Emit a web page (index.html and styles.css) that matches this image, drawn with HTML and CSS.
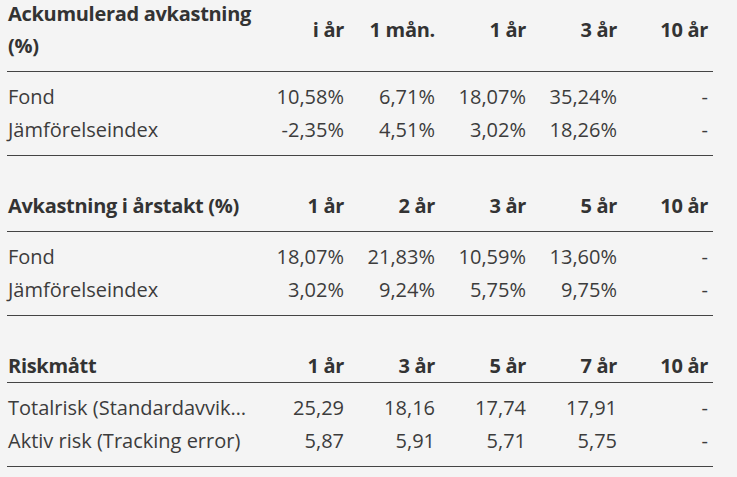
FILE: index.html
```html
<!DOCTYPE html>
<html lang="sv">
<head>
<meta charset="utf-8">
<link rel="stylesheet" href="styles.css">
</head>
<body>
<main class="page">
  <table class="perf first">
    <colgroup><col class="c-label"><col class="c-val"><col class="c-val"><col class="c-val"><col class="c-val"><col class="c-last"></colgroup>
    <thead>
      <tr><th class="label">Ackumulerad avkastning (%)</th><th>i år</th><th>1 mån.</th><th>1 år</th><th>3 år</th><th class="last">10 år</th></tr>
    </thead>
    <tbody>
      <tr class="r1"><td class="label">Fond</td><td>10,58%</td><td>6,71%</td><td>18,07%</td><td>35,24%</td><td class="last">-</td></tr>
      <tr class="r2"><td class="label">Jämförelseindex</td><td>-2,35%</td><td>4,51%</td><td>3,02%</td><td>18,26%</td><td class="last">-</td></tr>
    </tbody>
  </table>

  <table class="perf">
    <colgroup><col class="c-label"><col class="c-val"><col class="c-val"><col class="c-val"><col class="c-val"><col class="c-last"></colgroup>
    <thead>
      <tr><th class="label">Avkastning i årstakt (%)</th><th>1 år</th><th>2 år</th><th>3 år</th><th>5 år</th><th class="last">10 år</th></tr>
    </thead>
    <tbody>
      <tr class="r1"><td class="label">Fond</td><td>18,07%</td><td>21,83%</td><td>10,59%</td><td>13,60%</td><td class="last">-</td></tr>
      <tr class="r2"><td class="label">Jämförelseindex</td><td>3,02%</td><td>9,24%</td><td>5,75%</td><td>9,75%</td><td class="last">-</td></tr>
    </tbody>
  </table>

  <table class="perf risk">
    <colgroup><col class="c-label"><col class="c-val"><col class="c-val"><col class="c-val"><col class="c-val"><col class="c-last"></colgroup>
    <thead>
      <tr><th class="label">Riskmått</th><th>1 år</th><th>3 år</th><th>5 år</th><th>7 år</th><th class="last">10 år</th></tr>
    </thead>
    <tbody>
      <tr class="r1"><td class="label"><span class="clip" title="Totalrisk (Standardavvikelse)">Totalrisk (Standardavvik…</span></td><td>25,29</td><td>18,16</td><td>17,74</td><td>17,91</td><td class="last">-</td></tr>
      <tr class="r2"><td class="label">Aktiv risk (Tracking error)</td><td>5,87</td><td>5,91</td><td>5,71</td><td>5,75</td><td class="last">-</td></tr>
    </tbody>
  </table>
</main>
</body>
</html>
```

FILE: styles.css
```css
html, body {
  margin: 0;
  padding: 0;
  background: #f4f4f4;
}

body {
  font-family: "Open Sans", "Noto Sans", sans-serif;
  font-size: 20px;
  color: #3c3c3c;
}

.page {
  padding: 0 0 0 7px;
}

.perf {
  width: 706px;
  table-layout: fixed;
  border-collapse: collapse;
  margin-top: 34px;
}

.perf.first {
  margin-top: -2px;
}

.c-label { width: 246px; }
.c-val { width: 91px; }
.c-last { width: 96px; }

.perf th {
  font-weight: 700;
  color: #333333;
  line-height: 32px;
  letter-spacing: -0.3px;
  text-align: right;
  vertical-align: middle;
  padding: 0 0 9px 0;
  border-bottom: 1px solid #444444;
  white-space: nowrap;
}

.perf th.label {
  text-align: left;
  white-space: normal;
  padding-left: 1px;
}

.perf.risk th {
  padding-bottom: 0;
}

.perf td {
  line-height: 33px;
  text-align: right;
  padding: 0;
  white-space: nowrap;
}

.perf td.label {
  text-align: left;
  padding-left: 1px;
}

.perf th.last,
.perf td.last {
  padding-right: 5px;
}

.perf tr.r1 td { padding-top: 8px; }
.perf tr.r2 td { padding-bottom: 9px; border-bottom: 1px solid #444444; }

.clip {
  display: block;
  white-space: nowrap;
}
```
